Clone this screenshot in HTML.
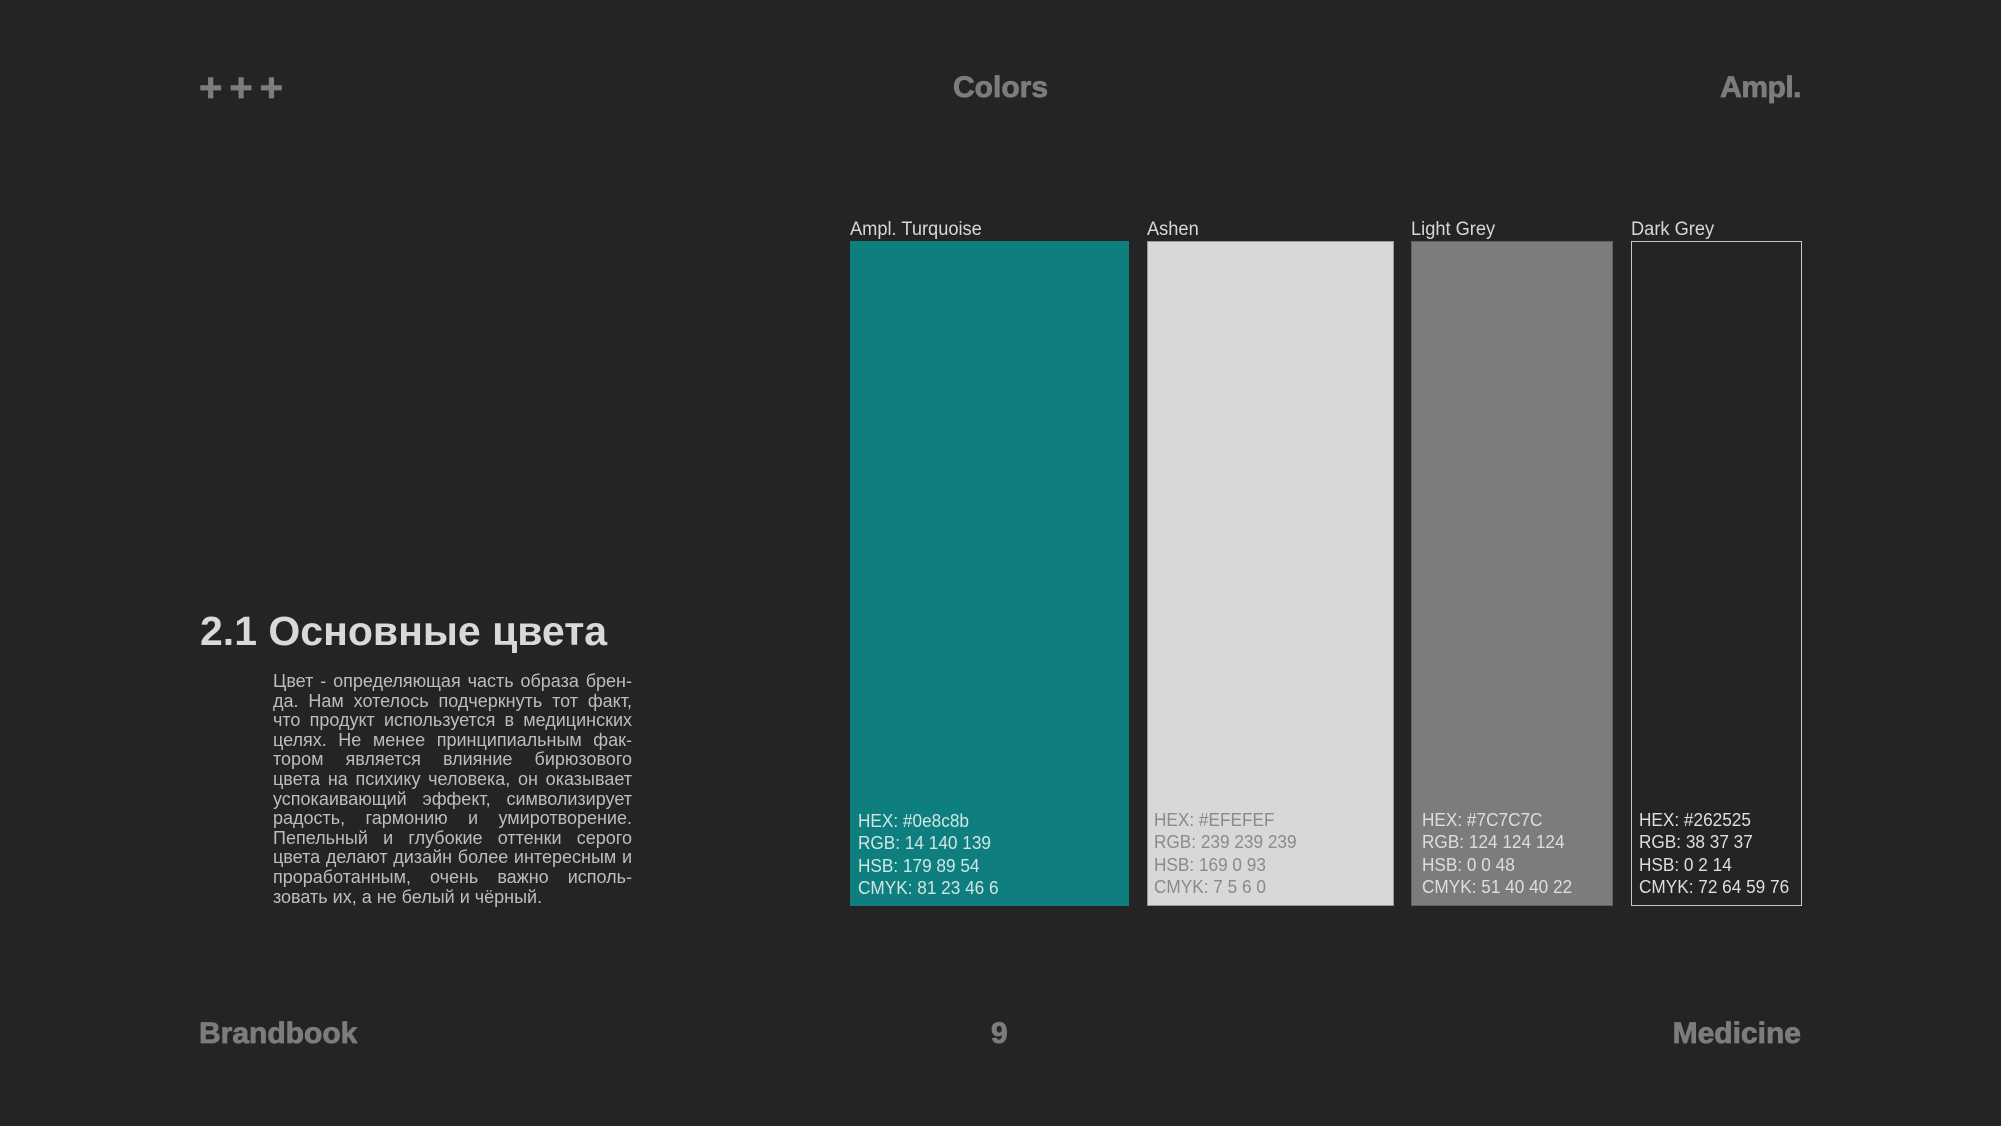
<!DOCTYPE html>
<html><head><meta charset="utf-8"><style>
*{margin:0;padding:0;box-sizing:border-box}
body{width:2001px;height:1126px;background:#252425;position:relative;overflow:hidden;font-family:"Liberation Sans","Noto Sans CJK SC",sans-serif}
.a{position:absolute;white-space:nowrap}
.hd{font-family:"Liberation Sans",sans-serif;font-weight:bold;color:#7c7c7c;font-size:30px;letter-spacing:-0.5px;-webkit-text-stroke:0.8px #7c7c7c}
.lbl{font-size:19px;color:#d8d8d8;top:219px;transform:scaleX(0.96);transform-origin:left}
.sw{position:absolute;top:241px;height:665px}
.v{position:absolute;left:8px;bottom:6px;font-size:18.5px;line-height:22.6px;white-space:nowrap;transform:scaleX(0.93);transform-origin:left}
p{position:absolute;left:273px;top:672px;width:359px;font-size:18px;line-height:19.6px;color:#bdbdbd;text-align:justify;text-align-last:left}
</style></head><body>
<div class="a hd" style="left:199px;top:66px;font-size:40px;letter-spacing:7px">+++</div>
<div class="a hd" style="left:953px;top:71px;letter-spacing:0">Colors</div>
<div class="a hd" style="right:200px;top:71px">Ampl.</div>
<div class="a hd" style="left:199px;top:1017px;letter-spacing:0">Brandbook</div>
<div class="a hd" style="left:991px;top:1017px">9</div>
<div class="a hd" style="right:200px;top:1017px;letter-spacing:0">Medicine</div>
<div class="a" style="left:200px;top:608px;font-weight:bold;font-size:41px;color:#d9d9d9">2.1 Основные цвета</div>
<p>Цвет - определяющая часть образа брен-да. Нам хотелось подчеркнуть тот факт, что продукт используется в медицинских целях. Не менее принципиальным фак-тором является влияние бирюзового цвета на психику человека, он оказывает успокаивающий эффект, символизирует радость, гармонию и умиротворение. Пепельный и глубокие оттенки серого цвета делают дизайн более интересным и проработанным, очень важно исполь-зовать их, а не белый и чёрный.</p>
<div class="a lbl" style="left:850px">Ampl. Turquoise</div>
<div class="a lbl" style="left:1147px">Ashen</div>
<div class="a lbl" style="left:1411px">Light Grey</div>
<div class="a lbl" style="left:1631px">Dark Grey</div>
<div class="sw" style="left:850px;width:279px;background:#0e7f7e"><div class="v" style="color:#d0e6e5">HEX: #0e8c8b<br>RGB: 14 140 139<br>HSB: 179 89 54<br>CMYK: 81 23 46 6</div></div>
<div class="sw" style="left:1147px;width:247px;background:#d8d8d8;border:1px solid #999"><div class="v" style="color:#8a8a8a;left:6px">HEX: #EFEFEF<br>RGB: 239 239 239<br>HSB: 169 0 93<br>CMYK: 7 5 6 0</div></div>
<div class="sw" style="left:1411px;width:202px;background:#7c7c7c;border:1px solid #606060"><div class="v" style="color:#dedede;left:10px">HEX: #7C7C7C<br>RGB: 124 124 124<br>HSB: 0 0 48<br>CMYK: 51 40 40 22</div></div>
<div class="sw" style="left:1631px;width:171px;background:#252425;border:1.5px solid #c8c8c8"><div class="v" style="color:#dedede;left:7px">HEX: #262525<br>RGB: 38 37 37<br>HSB: 0 2 14<br>CMYK: 72 64 59 76</div></div>
</body></html>
